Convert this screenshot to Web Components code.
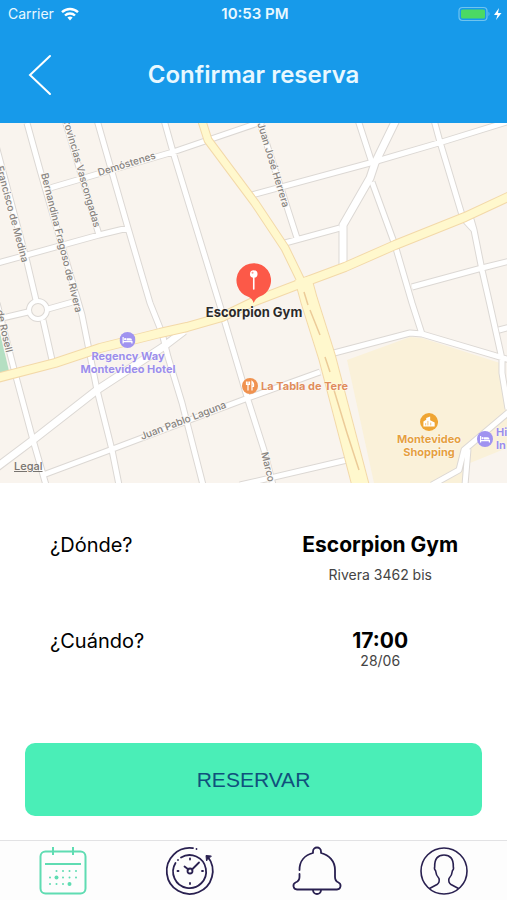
<!DOCTYPE html>
<html lang="es">
<head>
<meta charset="utf-8">
<meta name="viewport" content="width=device-width, initial-scale=1">
<title>Confirmar reserva</title>
<style>
  body {
    margin: 0;
    background: #fff;
    color: #000;
    font-family: Inter, "Liberation Sans", sans-serif;
  }
</style>
</head>
<body>
<booking-screen>
  <status-bar slot="header" carrier="Carrier" time="10:53 PM"></status-bar>
  <nav-header slot="header">Confirmar reserva</nav-header>
  <city-map>
    <map-place kind="hotel" x="128" y="217">Regency Way<br>Montevideo Hotel</map-place>
    <map-place kind="food" side x="250" y="263">La Tabla de Tere</map-place>
    <map-place kind="shop" x="429" y="298">Montevideo<br>Shopping</map-place>
    <map-place kind="hotel" side x="485" y="316">Hi<br>In</map-place>
    <map-place kind="pin" x="254" y="157">Escorpion Gym</map-place>
  </city-map>
  <booking-details>
    <detail-row label="¿Dónde?" value="Escorpion Gym" spaced>Rivera 3462 bis</detail-row>
    <detail-row label="¿Cuándo?" value="17:00">28/06</detail-row>
    <reserve-button slot="action">RESERVAR</reserve-button>
  </booking-details>
  <tab-bar slot="footer"></tab-bar>
</booking-screen>

<script>
class BookingScreen extends HTMLElement {
  constructor() {
    super();
    this.attachShadow({ mode: "open" });
  }

  connectedCallback() {
    this.shadowRoot.innerHTML = `
      <style>
        :host {
          display: flex;
          flex-direction: column;
          min-height: 100vh;
        }
        header {
          background: #179aea;
          color: #fff;
        }
        main {
          flex: 1;
        }
      </style>
      <header><slot name="header"></slot></header>
      <main><slot></slot></main>
      <slot name="footer"></slot>
    `;
  }
}

class StatusBar extends HTMLElement {
  constructor() {
    super();
    this.attachShadow({ mode: "open" });
  }

  connectedCallback() {
    this.shadowRoot.innerHTML = `
      <style>
        :host {
          display: grid;
          grid-template-columns: 1fr auto 1fr;
          align-items: center;
          height: 27px;
          padding: 0 5px 0 8px;
          font-size: 14px;
          color: #e8f8ff;
        }
        .left, .right {
          display: flex;
          align-items: center;
          gap: 7px;
        }
        .right {
          justify-content: flex-end;
        }
        .time {
          font-size: 15px;
          font-weight: 600;
        }
      </style>
      <div class="left">
        <span>${this.getAttribute("carrier")}</span>
        <svg width="18" height="14" viewBox="0 0 18 14" fill="none" stroke="#fff" stroke-width="2.4">
          <path d="M1 5.2a11.5 11.5 0 0 1 16 0"/>
          <path d="M4 8.5a7.2 7.2 0 0 1 10 0"/>
          <path d="M9 13.4 6.4 10.6a3.8 3.8 0 0 1 5.2 0z" fill="#fff" stroke="none"/>
        </svg>
      </div>
      <span class="time">${this.getAttribute("time")}</span>
      <div class="right">
        <svg width="44" height="16" viewBox="0 0 44 16">
          <rect x="1" y="1.5" width="28" height="13" rx="3.5" fill="none" stroke="#6fc4ef" stroke-width="1.2"/>
          <rect x="3" y="3.5" width="24" height="9" rx="1.5" fill="#4bd964"/>
          <path d="M30.5 5.8q2 2.2 0 4.4z" fill="#6fc4ef"/>
          <path d="M41 2 36 9h3.5L38 14l5.5-7H40z" fill="#fff"/>
        </svg>
      </div>
    `;
  }
}

class NavHeader extends HTMLElement {
  constructor() {
    super();
    this.attachShadow({ mode: "open" });
  }

  connectedCallback() {
    this.shadowRoot.innerHTML = `
      <style>
        :host {
          display: grid;
          grid-template-columns: 56px 1fr 56px;
          align-items: center;
          height: 96px;
        }
        button {
          display: flex;
          justify-content: flex-end;
          padding: 0 4px 0 0;
          border: 0;
          background: none;
        }
        h1 {
          margin: 0;
          font-size: 24px;
          line-height: 32px;
          font-weight: 600;
          text-align: center;
          color: #e8f8ff;
        }
      </style>
      <button type="button" aria-label="Volver">
        <svg width="24" height="42" viewBox="0 0 24 42" fill="none" stroke="#fff" stroke-width="2" stroke-linecap="round">
          <path d="M22 2 2 21 22 40"/>
        </svg>
      </button>
      <h1><slot></slot></h1>
    `;
  }
}

const streets = `
  M-10 0 27 139 36 177 M43 197 52 237
  M27 0 40 47 82 192 97 267 112 327 119 362
  M65 -3 99 112
  M97 -3 128 105 150 180 162 210 168 234 182 280 203 362
  M164 -3 173 29 221 186 240 250 248 277 264 327 273 362
  M50 65 173 29 264 -2
  M-2 140 99 112 128 105
  M-2 196 28 189 M48 186 80 177
  M-3 180 15 250 33 317 46 362
  M43 352 110 327 248 275 320 249
  M240 362 347 337
  M252 72 370 40 442 19 510 -2
  M259 -3 287 84 297 115
  M285 120 340 105
  M358 -3 372 40
  M372 59 395 122 412 180 422 211
  M434 -3 440 19 462 92
  M463 95 474 107 M470 93 474 107 482 147 490 182 502 236
  M412 164 482 145 510 138
  M499 207 510 204
  M334 230 410 210 422 211 510 237
  M502 237 502 250 508 286
  M510 288 464 327 459 347 432 362
  M468 326 465 362
`;
const wideStreets = `
  M-3 344 33 317 97 267 163 224 184 208
  M396 -3 375 40 370 55 343 102 343 143
`;
const avenue = "M-3 255 55 240 100 225 160 210 187 204 222 194 255 178 302 160 345 144 395 122 465 94 510 73";
const diagonal = "M201 -5 208 17 255 80 285 125 302 160";
const boulevard = "M303 155 309 177 327 234 361 364";

class CityMap extends HTMLElement {
  constructor() {
    super();
    this.attachShadow({ mode: "open" });
  }

  connectedCallback() {
    this.shadowRoot.innerHTML = `
      <style>
        :host {
          display: block;
          position: relative;
          overflow: hidden;
          aspect-ratio: 507 / 360;
          background: #f9f4ee;
        }
        svg {
          display: block;
          width: 100%;
          height: 100%;
        }
        .roads {
          fill: none;
          stroke-linejoin: round;
        }
        text {
          font-size: 10px;
          font-weight: 500;
          fill: #86827e;
          stroke: #fbf8f4;
          stroke-width: 2px;
          paint-order: stroke;
        }
        /* the attribution link floats over the map corner */
        a {
          position: absolute;
          left: 14px;
          bottom: 10px;
          font-size: 11px;
          line-height: 14px;
          font-weight: 500;
          color: #77736f;
        }
      </style>
      <svg viewBox="0 0 507 360" preserveAspectRatio="xMidYMid slice">
        <path d="M0 210 9 248 0 250z" fill="#b5dfc2"/>
        <path d="M347 237 410 214 422 215 500 240 500 255 507 285V325L470 340 465 360H374z" fill="#faf1d9"/>
        <g class="roads">
          <path d="${streets}" stroke="#dcd8d4" stroke-width="7"/>
          <path d="${wideStreets}" stroke="#dcd8d4" stroke-width="9"/>
          <circle cx="38" cy="187" r="9" stroke="#dcd8d4" stroke-width="6"/>
          <path d="${streets}" stroke="#fff" stroke-width="5"/>
          <path d="${wideStreets}" stroke="#fff" stroke-width="7"/>
          <circle cx="38" cy="187" r="9" stroke="#fff" stroke-width="4"/>
          <path d="${avenue}" stroke="#f3d9a9" stroke-width="10"/>
          <path d="${diagonal}" stroke="#f3d9a9" stroke-width="9"/>
          <path d="${boulevard}" stroke="#f3d9a9" stroke-width="18"/>
          <path d="${avenue}" stroke="#fff8cd" stroke-width="8"/>
          <path d="${diagonal}" stroke="#fff8cd" stroke-width="7"/>
          <path d="${boulevard}" stroke="#fff8cd" stroke-width="16"/>
          <path d="M304 169 308 182M310 187 320 212M325 234 330 249M334 267 347 310 359 347" stroke="#eccb98" stroke-width="1.5"/>
        </g>
        <text transform="translate(99 53) rotate(-17)">Demóstenes</text>
        <text transform="translate(142 317) rotate(-21)">Juan Pablo Laguna</text>
        <text transform="translate(41 51) rotate(76)">Bernandina Fragoso de Rivera</text>
        <text transform="translate(22 140) rotate(75)" text-anchor="end">Francisco de Medina</text>
        <text transform="translate(94 105) rotate(74)" text-anchor="end">Provincias Vascongadas</text>
        <text transform="translate(283 85) rotate(73)" text-anchor="end">Juan José Herrera</text>
        <text transform="translate(6 230) rotate(77)" text-anchor="end">de Rosell</text>
        <text transform="translate(261 330) rotate(76)">Marco</text>
      </svg>
      <slot></slot>
      <a href="#legal">Legal</a>
    `;
  }
}

const placeIcons = {
  hotel: `<svg width="16" height="16" viewBox="0 0 16 16"><circle cx="8" cy="8" r="8" fill="#a093f0"/><path d="M3 5h1.2v4h8.800v2.5h-1.200v-1.200H4.200v1.200H3z" fill="#fff"/><path d="M7 6.200h3.500q2 0 2 2.300H7z" fill="#fff"/><circle cx="5.6" cy="7.2" r="1.1" fill="#fff"/></svg>`,
  food: `<svg width="16" height="16" viewBox="0 0 16 16"><circle cx="8" cy="8" r="8" fill="#f0924f"/><path d="M4.5 3.5v3h3v-3M6 3.5v9M10 12.5v-9q2 1.5 1.5 5H10" fill="none" stroke="#fff" stroke-width="1.2"/></svg>`,
  shop: `<svg width="18" height="18" viewBox="0 0 16 16"><circle cx="8" cy="8" r="8" fill="#efa533"/><path d="M3 12V7.500L5.500 6V4.500l3.500-1.500v3.500l4 2V12z" fill="#fff"/><path d="M5 11V9M7 11V7M9.500 11V8.500" stroke="#efa533" stroke-width=".6"/></svg>`,
  pin: `<svg width="36" height="42" viewBox="0 0 36 42"><path d="M18 41q-1.5-4.5-5-6A17.3 17.3 0 1 1 23 35q-3.500 1.500-5 6z" fill="#fc5948"/><path d="M18 11V27" stroke="#fff" stroke-width="1.6" stroke-linecap="round"/><circle cx="18" cy="12" r="3.8" fill="#fff"/><circle cx="16.8" cy="10.8" r="1" fill="#fc9a90"/></svg>`,
};

class MapPlace extends HTMLElement {
  constructor() {
    super();
    this.attachShadow({ mode: "open" });
  }

  connectedCallback() {
    const kind = this.getAttribute("kind");
    // x and y are in the units of the 507 x 360 map drawing
    this.style.left = `${(this.getAttribute("x") / 507) * 100}%`;
    this.style.top = `${(this.getAttribute("y") / 360) * 100}%`;

    this.shadowRoot.innerHTML = `
      <style>
        :host {
          position: absolute;
          display: flex;
          flex-direction: column;
          align-items: center;
          gap: 2px;
          transform: translate(-50%, -8px);
          font-size: 11px;
          line-height: 13px;
          font-weight: 700;
          text-align: center;
          white-space: nowrap;
          text-shadow: 0 0 2px #fff, 0 0 1px #fff;
        }
        :host([side]) {
          flex-direction: row;
          gap: 3px;
          transform: translate(-8px, -50%);
          text-align: left;
        }
        :host([kind="hotel"]) { color: #9c8eea; }
        :host([kind="food"]) { color: #e08d5c; }
        :host([kind="shop"]) { color: #e5a040; }
        :host([kind="pin"]) {
          transform: translate(-50%, -18px);
          font-size: 13px;
          color: #2c2a29;
        }
        svg { flex: none; display: block; }
      </style>
      ${placeIcons[kind]}
      <span><slot></slot></span>
    `;
  }
}

class BookingDetails extends HTMLElement {
  constructor() {
    super();
    this.attachShadow({ mode: "open" });
  }

  connectedCallback() {
    this.shadowRoot.innerHTML = `
      <style>
        :host {
          display: block;
          padding: 50px 0 24px;
        }
        .rows {
          display: grid;
          gap: 46px;
        }
        .action {
          padding: 74px 25px 0;
        }
      </style>
      <div class="rows"><slot></slot></div>
      <div class="action"><slot name="action"></slot></div>
    `;
  }
}

class DetailRow extends HTMLElement {
  constructor() {
    super();
    this.attachShadow({ mode: "open" });
  }

  connectedCallback() {
    this.shadowRoot.innerHTML = `
      <style>
        :host {
          display: block;
        }
        dl {
          display: grid;
          grid-template-columns: 1fr 1fr;
          margin: 0;
          font-size: 20px;
          line-height: 24px;
        }
        dt {
          padding-left: 50px;
        }
        dd {
          display: flex;
          flex-direction: column;
          align-items: center;
          margin: 0;
        }
        :host([spaced]) dd {
          gap: 10px;
        }
        strong {
          font-size: 21px;
          font-weight: 700;
        }
        .note {
          font-size: 14px;
          line-height: 16px;
          color: #444;
        }
      </style>
      <dl>
        <dt>${this.getAttribute("label")}</dt>
        <dd>
          <strong>${this.getAttribute("value")}</strong>
          <span class="note"><slot></slot></span>
        </dd>
      </dl>
    `;
  }
}

class ReserveButton extends HTMLElement {
  constructor() {
    super();
    this.attachShadow({ mode: "open" });
  }

  connectedCallback() {
    this.shadowRoot.innerHTML = `
      <style>
        :host {
          display: block;
        }
        button {
          display: block;
          width: 100%;
          height: 73px;
          border: 0;
          border-radius: 10px;
          background: #4aeeb7;
          color: #10507c;
          font-family: "Liberation Sans", Arial, sans-serif;
          font-size: 21px;
        }
      </style>
      <button type="button"><slot></slot></button>
    `;
  }
}

const tabs = [
  {
    name: "Reservas",
    icon: `<g stroke="#5fdcb2" stroke-width="2">
        <rect x="1.5" y="4.5" width="45" height="42" rx="5"/>
        <path d="M14 0v8M34 0v8"/>
        <path d="M6 17h36"/>
      </g>
      <g fill="#5fdcb2">
        <circle cx="17.5" cy="24" r="1"/><circle cx="24" cy="24" r="1"/><circle cx="30.5" cy="24" r="1"/><circle cx="37" cy="24" r="1"/>
        <circle cx="11" cy="30.5" r="1"/><circle cx="17.5" cy="30.5" r="2"/><circle cx="24" cy="30.5" r="1"/><circle cx="30.5" cy="30.5" r="1"/><circle cx="37" cy="30.5" r="1"/>
        <circle cx="11" cy="37" r="1"/><circle cx="17.5" cy="37" r="1"/><circle cx="24" cy="37" r="1"/><circle cx="30.5" cy="37" r="2"/>
      </g>`,
  },
  {
    name: "Historial",
    icon: `<g stroke="#292050" stroke-width="1.8" stroke-linecap="round">
        <path d="M27 1.2A23 23 0 1 0 42 10"/>
        <path d="M15 10.500A16.500 16.500 0 1 1 9.500 16"/>
        <path d="m40.500 13.500-.5-5 5 .5z" fill="#292050" stroke-width="1" stroke-linejoin="round"/>
        <path d="m18.5 19.5 4 3M26 22.500l7-7"/>
        <circle cx="24" cy="24" r="2.5"/>
        <path d="M24 11.5v1M24 36v1M11.5 24h1M36 24h1M30.500 2v.1M12 13v.1"/>
      </g>`,
  },
  {
    name: "Notificaciones",
    icon: `<g stroke="#292050" stroke-width="1.8" stroke-linecap="round" stroke-linejoin="round">
        <path d="M6.5 23C6.5 14 12 8 20 6V4.500a4 4 0 0 1 8 0V6c8 2 14 8 14 17v7q0 4 3.500 5.500a3.700 3.700 0 0 1-1.500 7H4a3.700 3.700 0 0 1-1.500-7Q6.500 34 6.500 30v-3"/>
        <path d="M20 43a4 4 0 0 0 8 0"/>
      </g>`,
  },
  {
    name: "Perfil",
    icon: `<g stroke="#292050" stroke-width="1.6" stroke-linejoin="round">
        <circle cx="24" cy="24" r="23"/>
        <path d="M9.500 41.500 17 37.500q3-2 2-6-3-3-3.500-8-1.500-1-.8-4Q14.500 8 24 8t9.300 11.500q.7 3-.8 4-.5 5-3.500 8-1 4 2 6l7.500 4"/>
      </g>`,
  },
];

class TabBar extends HTMLElement {
  constructor() {
    super();
    this.attachShadow({ mode: "open" });
  }

  connectedCallback() {
    this.shadowRoot.innerHTML = `
      <style>
        :host {
          display: block;
          border-top: 1px solid #e2e2e4;
          background: #fdfdfd;
        }
        nav {
          display: grid;
          grid-template-columns: repeat(4, 1fr);
          height: 59px;
        }
        button {
          display: flex;
          align-items: center;
          justify-content: center;
          padding: 0;
          border: 0;
          background: none;
        }
        svg {
          overflow: visible;
        }
      </style>
      <nav>
        ${tabs.map((tab) => `
          <button type="button" aria-label="${tab.name}">
            <svg width="48" height="48" viewBox="0 0 48 48" fill="none">${tab.icon}</svg>
          </button>`).join("")}
      </nav>
    `;
  }
}

customElements.define("booking-screen", BookingScreen);
customElements.define("status-bar", StatusBar);
customElements.define("nav-header", NavHeader);
customElements.define("city-map", CityMap);
customElements.define("map-place", MapPlace);
customElements.define("booking-details", BookingDetails);
customElements.define("detail-row", DetailRow);
customElements.define("reserve-button", ReserveButton);
customElements.define("tab-bar", TabBar);
</script>
</body>
</html>
